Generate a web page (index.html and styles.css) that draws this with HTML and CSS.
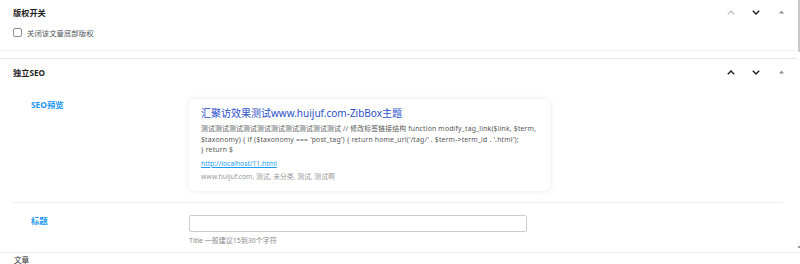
FILE: index.html
```html
<!DOCTYPE html>
<html>
<head>
	<title>文章</title>
	<link rel="stylesheet" href="styles.css">
</head>
<body>
	<div class="metaboxes">
		<div class="scroll-area">
			<div class="postbox first">
				<div class="postbox-header">
					<h2 class="hndle">版权开关</h2>
					<div class="handle-actions">
						<span class="order-btn disabled"><svg width="8" height="5" viewBox="0 0 8 5"><path d="M0.8 4.2 L4 1 L7.2 4.2" fill="none" stroke="currentColor" stroke-width="1.4"/></svg></span>
						<span class="order-btn"><svg width="8" height="5" viewBox="0 0 8 5"><path d="M0.8 0.8 L4 4 L7.2 0.8" fill="none" stroke="currentColor" stroke-width="1.4"/></svg></span>
						<span class="toggle-btn"><svg width="5" height="4" viewBox="0 0 5 4"><path d="M0 3.5 L2.5 0.5 L5 3.5 Z" fill="currentColor"/></svg></span>
					</div>
				</div>
				<div class="inside">
					<label class="check-label"><span class="checkbox"></span>关闭该文章底部版权</label>
				</div>
			</div>

			<div class="postbox second">
				<div class="postbox-header">
					<h2 class="hndle">独立SEO</h2>
					<div class="handle-actions">
						<span class="order-btn"><svg width="8" height="5" viewBox="0 0 8 5"><path d="M0.8 4.2 L4 1 L7.2 4.2" fill="none" stroke="currentColor" stroke-width="1.4"/></svg></span>
						<span class="order-btn"><svg width="8" height="5" viewBox="0 0 8 5"><path d="M0.8 0.8 L4 4 L7.2 0.8" fill="none" stroke="currentColor" stroke-width="1.4"/></svg></span>
						<span class="toggle-btn"><svg width="5" height="4" viewBox="0 0 5 4"><path d="M0 3.5 L2.5 0.5 L5 3.5 Z" fill="currentColor"/></svg></span>
					</div>
				</div>
				<div class="inside">
					<div class="field preview-field">
						<div class="field-title">SEO预览</div>
						<div class="field-content">
							<div class="seo-card">
								<div class="seo-title">汇聚访效果测试www.huijuf.com-ZibBox主题</div>
								<div class="seo-desc">测试测试测试测试测试测试测试测试测试测试 // 修改标签链接结构 function modify_tag_link($link, $term,<br>$taxonomy) { if ($taxonomy === 'post_tag') { return home_url('/tag/' . $term->term_id . '.html');<br>} return $</div>
								<a class="seo-url" href="#">http://localhost/11.html</a>
								<div class="seo-meta">www.huijuf.com, 测试, 未分类, 测试, 测试啊</div>
							</div>
						</div>
					</div>
					<div class="field">
						<div class="field-title">标题</div>
						<div class="field-content">
							<input type="text" class="text-input">
							<p class="field-desc">Title 一般建议15到30个字符</p>
						</div>
					</div>
				</div>
			</div>
		</div>
		<div class="scrollbar"><div class="thumb"></div><div class="arrow"></div></div>
	</div>
	<div class="footer">文章</div>
</body>
</html>
```

FILE: styles.css
```css
body {
	margin: 0;
	background-color: #fff;
	font-family: "Noto Sans", "Noto Sans CJK SC", sans-serif;
	color: #1e1e1e;
	overflow: hidden;
}

.metaboxes {
	display: flex;
	height: 252px;
}

.scroll-area {
	flex: 1;
	overflow: hidden;
}

.scrollbar {
	width: 3px;
	display: flex;
	flex-direction: column;
	justify-content: space-between;
	align-items: flex-end;
}

.scrollbar .thumb {
	width: 2px;
	height: 52px;
	background-color: #c8c8c8;
}

.scrollbar .arrow {
	width: 2px;
	height: 2px;
	margin-bottom: 4px;
	background-color: #999;
}

.postbox.first {
	border-bottom: 1px solid #f2f2f2;
	margin-bottom: 7px;
}

.postbox.second {
	border-top: 1px solid #e6e6e6;
}

.postbox-header {
	display: flex;
	align-items: center;
	justify-content: space-between;
	height: 24px;
	padding: 0 10px 0 13px;
}

.postbox.second .postbox-header {
	height: 26px;
}

.hndle {
	margin: 0;
	font-size: 8.2px;
	font-weight: 700;
	color: #1e1e1e;
}

.handle-actions {
	display: flex;
	align-items: center;
}

.order-btn {
	display: flex;
	width: 8px;
	margin-left: 17px;
	color: #1e1e1e;
}

.order-btn.disabled {
	color: #c3c4c7;
}

.toggle-btn {
	display: flex;
	margin-left: 19px;
	margin-right: 3px;
	color: #8c8f94;
}

.postbox.first .inside {
	padding: 0 13px 10px;
}

.check-label {
	display: flex;
	align-items: center;
	height: 16px;
	font-size: 7.4px;
	color: #50575e;
}

.checkbox {
	width: 7px;
	height: 7px;
	border: 1px solid #8c8f94;
	border-radius: 2px;
	margin-right: 5px;
}

.field {
	display: flex;
	margin: 0 14px 0 13px;
	padding: 14px 0 11px 18px;
	border-bottom: 1px solid #f0f0f0;
}

.field:last-child {
	border-bottom: none;
	padding-top: 12px;
	padding-bottom: 0;
}

.field-title {
	width: 158px;
	flex-shrink: 0;
	font-size: 8.4px;
	font-weight: 700;
	line-height: 12px;
	color: #2196f3;
}

.field-content {
	flex: 1;
}

.seo-card {
	width: 337px;
	padding: 8px 12px 9px;
	border-radius: 6px;
	box-shadow: 0 0 6px rgba(0, 0, 0, 0.09);
}

.seo-title {
	font-size: 10px;
	line-height: 13px;
	color: #2b4fc9;
	margin-bottom: 4px;
}

.seo-desc {
	font-size: 6.8px;
	line-height: 10.5px;
	letter-spacing: 0.2px;
	color: #555;
	white-space: nowrap;
}

.seo-url {
	display: block;
	margin-top: 3px;
	font-size: 6.8px;
	line-height: 10px;
	color: #1a9cf7;
}

.seo-meta {
	margin-top: 3px;
	font-size: 6.8px;
	line-height: 10px;
	color: #999;
}

.text-input {
	display: block;
	box-sizing: border-box;
	width: 338px;
	height: 17px;
	margin: 0;
	border: 1px solid #ccc;
	border-radius: 2px;
}

.field-desc {
	margin: 4px 0 0;
	font-size: 7px;
	line-height: 10px;
	color: #888;
}

.footer {
	border-top: 1px solid #ececec;
	padding: 0 14px;
	font-size: 7.6px;
	line-height: 14px;
	color: #333;
}
```
